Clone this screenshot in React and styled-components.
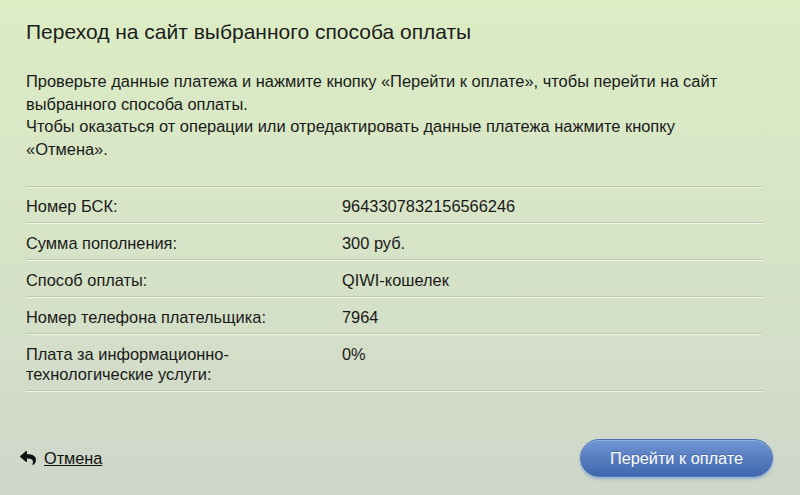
import React from 'react';
import styled, { createGlobalStyle } from 'styled-components';
import { FaReply } from 'react-icons/fa';

const GlobalStyle = createGlobalStyle`
  html, body {
    margin: 0;
    padding: 0;
  }
  body {
    font-family: "Liberation Sans", Arial, sans-serif;
    color: #1a1a1a;
  }
`;

const rows = [
  { label: 'Номер БСК:', value: '9643307832156566246' },
  { label: 'Сумма пополнения:', value: '300 руб.' },
  { label: 'Способ оплаты:', value: 'QIWI-кошелек' },
  { label: 'Номер телефона плательщика:', value: '7964' },
  { label: 'Плата за информационно-технологические услуги:', value: '0%' },
];

const Page = styled.div`
  box-sizing: border-box;
  width: 800px;
  height: 495px;
  padding: 20px 27px 0 20px;
  background: linear-gradient(180deg, #dcedc4 0%, #d6e2c7 55%, #cfd6ca 100%);
  overflow: hidden;
`;

const Content = styled.div`
  padding: 0 11px 0 6px;
`;

const Title = styled.h1`
  margin: 0;
  font-size: 21px;
  line-height: 24px;
  font-weight: normal;
  color: #1c1c1c;
`;

const Intro = styled.p`
  margin: 26px 0 0;
  max-width: 700px;
  font-size: 16.45px;
  line-height: 22.6px;
`;

const Table = styled.div`
  margin-top: 26px;
  border-top: 1px solid #bcc7ae;
  box-shadow: inset 0 1px 0 #eef4e6;
`;

const Row = styled.div`
  display: grid;
  grid-template-columns: 316px 1fr;
  padding: 9px 0 6px;
  font-size: 16.4px;
  line-height: 20px;
  border-bottom: 1px solid #bcc7ae;
  box-shadow: 0 1px 0 #eef4e6;
  margin-bottom: 1px;
`;

const Label = styled.span`
  padding-right: 20px;
`;

const Value = styled.span``;

const Footer = styled.div`
  display: flex;
  align-items: center;
  justify-content: space-between;
  margin-top: 48px;
`;

const CancelLink = styled.a`
  display: flex;
  align-items: center;
  gap: 8px;
  font-size: 16.3px;
  color: #111;
  cursor: pointer;

  span {
    text-decoration: underline;
  }
`;

const PayButton = styled.button`
  width: 193px;
  height: 38px;
  border: 1px solid #4f74b6;
  border-radius: 19px;
  background: linear-gradient(180deg, #7196d3 0%, #5a80c2 45%, #3f67ad 100%);
  box-shadow: 0 2px 3px rgba(90, 140, 215, 0.55), inset 0 1px 0 rgba(255, 255, 255, 0.25);
  color: #fff;
  font-family: "Liberation Sans", Arial, sans-serif;
  font-size: 16.3px;
  text-shadow: 0 -1px 0 rgba(30, 50, 100, 0.35);
  cursor: pointer;
`;

export default function App() {
  return (
    <>
      <GlobalStyle />
      <Page>
        <Content>
          <Title>Переход на сайт выбранного способа оплаты</Title>
          <Intro>
            Проверьте данные платежа и нажмите кнопку «Перейти к оплате», чтобы перейти на сайт выбранного способа оплаты.
            <br />
            Чтобы оказаться от операции или отредактировать данные платежа нажмите кнопку «Отмена».
          </Intro>
          <Table>
            {rows.map((r) => (
              <Row key={r.label}>
                <Label>{r.label}</Label>
                <Value>{r.value}</Value>
              </Row>
            ))}
          </Table>
        </Content>
        <Footer>
          <CancelLink>
            <FaReply size={16} />
            <span>Отмена</span>
          </CancelLink>
          <PayButton>Перейти к оплате</PayButton>
        </Footer>
      </Page>
    </>
  );
}
